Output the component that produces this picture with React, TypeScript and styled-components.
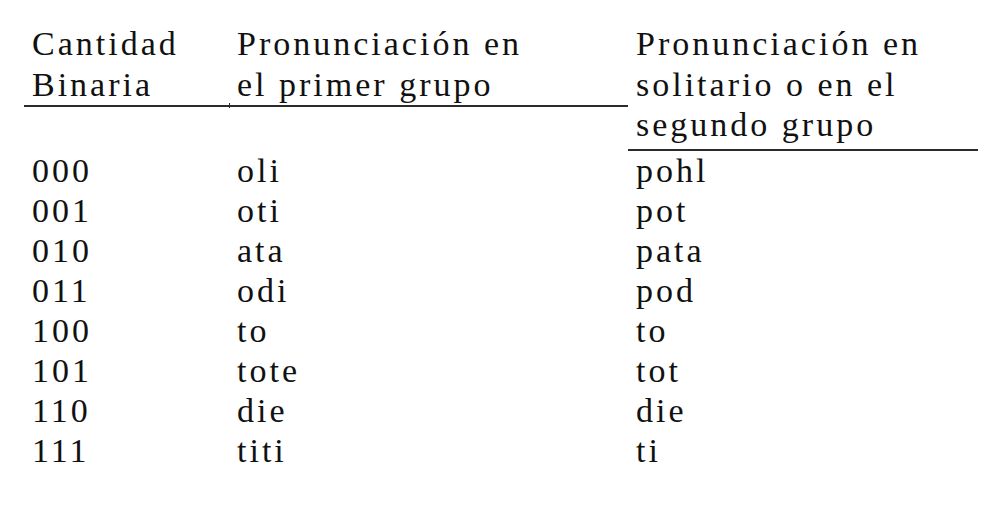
import styled, { createGlobalStyle } from "styled-components";

const GlobalStyle = createGlobalStyle`
  html, body {
    margin: 0;
    padding: 0;
    background: #ffffff;
  }
  body {
    font-family: "Liberation Serif", "Times New Roman", serif;
    color: #111111;
  }
`;

const Page = styled.div`
  width: 1000px;
  height: 505px;
  padding: 24px 0 0 24px;
  box-sizing: border-box;
  overflow: hidden;
`;

const Columns = styled.div`
  display: grid;
  grid-template-columns: 205px 399px 350px;
  align-items: start;
  font-size: 34px;
  letter-spacing: 3px;
`;

const HeadCell = styled.div<{ $tick?: boolean; $extra?: boolean }>`
  position: relative;
  line-height: 40.5px;
  padding: 0 0 ${(p) => (p.$extra ? "3px" : "0")} 8px;
  border-bottom: 2px solid #2b2b2b;
  white-space: nowrap;

  ${(p) =>
    p.$tick &&
    `
    &::before {
      content: "";
      position: absolute;
      left: 0;
      bottom: -3px;
      width: 1px;
      height: 5px;
      background: #2b2b2b;
    }
  `}
`;

const Row = styled(Columns)`
  line-height: 40px;
`;

const Cell = styled.div`
  padding-left: 8px;
  white-space: nowrap;
`;

const rows: [string, string, string][] = [
  ["000", "oli", "pohl"],
  ["001", "oti", "pot"],
  ["010", "ata", "pata"],
  ["011", "odi", "pod"],
  ["100", "to", "to"],
  ["101", "tote", "tot"],
  ["110", "die", "die"],
  ["111", "titi", "ti"],
];

export default function App() {
  return (
    <>
      <GlobalStyle />
      <Page>
        <Columns>
          <HeadCell>
            Cantidad
            <br />
            Binaria
          </HeadCell>
          <HeadCell $tick>
            Pronunciación en
            <br />
            el primer grupo
          </HeadCell>
          <HeadCell $extra>
            Pronunciación en
            <br />
            solitario o en el
            <br />
            segundo grupo
          </HeadCell>
        </Columns>
        {rows.map(([bin, first, alone]) => (
          <Row key={bin}>
            <Cell>{bin}</Cell>
            <Cell>{first}</Cell>
            <Cell>{alone}</Cell>
          </Row>
        ))}
      </Page>
    </>
  );
}
